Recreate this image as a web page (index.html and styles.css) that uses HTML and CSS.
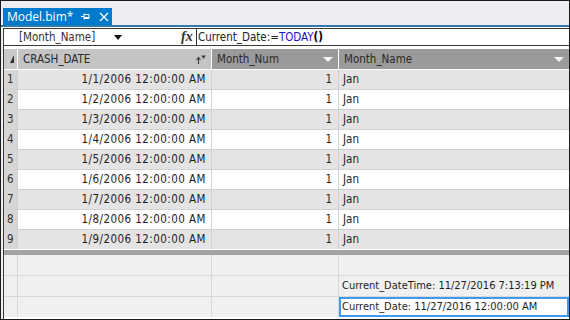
FILE: index.html
```html
<!DOCTYPE html>
<html lang="en">
<head>
    <meta charset="UTF-8">
    <title>Model.bim</title>
    <link rel="stylesheet" href="styles.css">
</head>
<body>
    <div class="frame">
        <div class="tabstrip">
            <div class="tab">
                <span class="tab-title">Model.bim*</span>
                <span class="tab-pin">
                    <svg width="9" height="9" viewBox="0 0 9 9"><path d="M0 4.5h3M3 1.5v6M3 2.5h5v4H3M3 5.5h5" stroke="#fff" stroke-width="1" fill="none"/></svg>
                </span>
                <span class="tab-close">
                    <svg width="10" height="10" viewBox="0 0 10 10"><path d="M1 1l8 8M9 1l-8 8" stroke="#fff" stroke-width="1.3"/></svg>
                </span>
            </div>
        </div>
        <div class="tabline"></div>
        <div class="doc">
            <div class="formula-bar">
                <div class="measure-select">
                    <span>[Month_Name]</span>
                    <span class="select-arrow"></span>
                </div>
                <div class="fx">fx</div>
                <div class="formula">Current_Date:=<span class="fn">TODAY</span><b>()</b></div>
            </div>

            <div class="grid">
                <div class="hcell corner"><span class="corner-mark"></span></div>
                <div class="hcell col-sel">CRASH_DATE
                    <svg class="sort-icon" width="10" height="9" viewBox="0 0 10 9"><path d="M2.5 9V3M0.5 5l2-2.5 2 2.5" stroke="#444" stroke-width="1.2" fill="none"/><path d="M5 0.5h5L7.5 4z" fill="#444"/></svg>
                </div>
                <div class="hcell">Month_Num<span class="filter-icon"></span></div>
                <div class="hcell">Month_Name<span class="filter-icon"></span></div>
            </div>

            <div class="grid rows" id="rows"></div>

            <div class="split"></div>

            <div class="grid measures">
                <div class="rn"></div><div class="mc"></div><div class="mc"></div><div class="mc"></div>
                <div class="rn"></div><div class="mc"></div><div class="mc"></div><div class="mc">Current_DateTime: 11/27/2016 7:13:19 PM</div>
                <div class="rn"></div><div class="mc"></div><div class="mc"></div><div class="mc active">Current_Date: 11/27/2016 12:00:00 AM</div>
            </div>
        </div>
    </div>
    <script>
        // fill the nine data rows
        var rows = document.getElementById('rows');
        for (var i = 1; i <= 9; i++) {
            var alt = i % 2 ? ' odd' : '';
            rows.innerHTML +=
                '<div class="rn">' + i + '</div>' +
                '<div class="cell num date' + alt + '">1/' + i + '/2006 12:00:00 AM</div>' +
                '<div class="cell num' + alt + '">1</div>' +
                '<div class="cell' + alt + '">Jan</div>';
        }
    </script>
</body>
</html>
```

FILE: styles.css
```css
body {
    margin: 0;
    font-family: "DejaVu Sans Condensed", "DejaVu Sans", sans-serif;
    font-stretch: condensed;
    font-size: 11px;
    color: #1e1e1e;
}
.frame {
    width: 570px;
    height: 320px;
    box-sizing: border-box;
    border: 1px solid #1c1c1c;
    background: #eeeef2;
    overflow: hidden;
}
.tabstrip {
    height: 24px;
    display: flex;
    align-items: flex-end;
    padding-left: 2px;
}
.tab {
    width: 109px;
    height: 17px;
    background: #007acc;
    color: #fff;
    display: flex;
    align-items: center;
    box-sizing: border-box;
    padding-left: 4px;
}
.tab-title {
    font-family: "Open Sans", sans-serif;
    font-stretch: normal;
    font-size: 12px;
    width: 74px;
}
.tab-pin {
    display: flex;
}
.tab-close {
    margin-left: 9px;
    display: flex;
}
.tabline {
    height: 2px;
    background: #2f79ad;
    border-bottom: 1px solid #fff;
}
.doc {
    margin-left: 2px;
    border-left: 1px solid #3a3a3a;
    background: #fff;
    height: 291px;
}
.formula-bar {
    height: 16px;
    border-top: 1px solid #3a3a3a;
    border-bottom: 1px solid #3a3a3a;
    display: flex;
    align-items: center;
    margin-bottom: 3px;
}
.measure-select {
    width: 103px;
    display: flex;
    align-items: center;
    padding-left: 15px;
    color: #333;
    font-size: 11.5px;
}
.select-arrow {
    margin-left: auto;
    border-left: 4px solid transparent;
    border-right: 4px solid transparent;
    border-top: 5px solid #111;
}
.fx {
    margin-left: 59px;
    font-family: "Liberation Serif", serif;
    font-style: italic;
    font-weight: bold;
    font-size: 14px;
    color: #333;
    width: 14px;
    padding-right: 1px;
    border-right: 1px solid #333;
    height: 16px;
    line-height: 15px;
}
.formula {
    padding-left: 1px;
    font-size: 11.5px;
    color: #222;
}
.fn {
    color: #1515c8;
}
.formula b {
    font-weight: bold;
    color: #000;
}
.grid {
    display: grid;
    grid-template-columns: 13px 193px 126px 1fr;
    column-gap: 1px;
}
.hcell {
    height: 20px;
    background: #9a9a9a;
    color: #2a2a2a;
    display: flex;
    align-items: center;
    padding-left: 5px;
    padding-right: 5px;
    margin-bottom: 1px;
    font-size: 11.5px;
}
.hcell.corner {
    background: #c9c9c9;
    padding: 0;
    justify-content: center;
}
.corner-mark {
    width: 0;
    height: 0;
    border-left: 4px solid transparent;
    border-bottom: 8px solid #333;
    margin-left: 2px;
}
.hcell.col-sel {
    background: #c4c4c4;
}
.sort-icon {
    margin-left: auto;
}
.filter-icon {
    margin-left: auto;
    width: 0;
    height: 0;
    border-left: 5px solid transparent;
    border-right: 5px solid transparent;
    border-top: 5px solid #f2f2f2;
}
.grid.rows {
    row-gap: 1px;
    background: #d2d2d2;
}
.rn {
    background: #d6d6d6;
    height: 19px;
    line-height: 19px;
    padding-left: 3px;
    font-size: 11.5px;
    color: #333;
}
.cell {
    background: #fff;
    height: 19px;
    line-height: 19px;
    padding: 0 4px;
    font-size: 11.5px;
}
.cell.odd {
    background: #e4e4e4;
}
.cell.num {
    text-align: right;
    padding-right: 6px;
}
.cell.date {
    letter-spacing: 0.45px;
    padding-right: 5px;
}
.split {
    height: 5px;
    border-top: 1px solid #fff;
    background: #a3a3a3;
}
.grid.measures {
    row-gap: 1px;
    background: #d8d8d8;
}
.measures .rn {
    background: #efefef;
    height: 20px;
}
.mc {
    background: #f0f0f0;
    height: 20px;
    line-height: 20px;
    padding-left: 3px;
    font-size: 11px;
}
.mc.active {
    background: #fff;
    outline: 2px solid #3c9bf0;
    outline-offset: -2px;
}
```
